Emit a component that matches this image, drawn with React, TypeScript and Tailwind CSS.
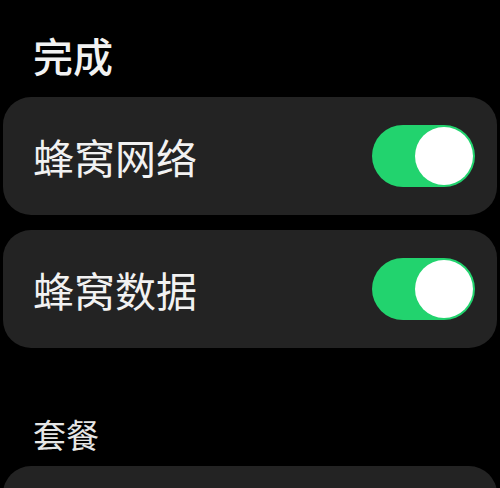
import { useState } from 'react';

const cjk = { fontFamily: '"Noto Sans CJK SC", "Noto Sans", sans-serif' };

function Toggle({ on, onChange }: { on: boolean; onChange: (v: boolean) => void }) {
  return (
    <button
      type="button"
      onClick={() => onChange(!on)}
      className={
        'relative h-[62px] w-[103px] shrink-0 rounded-full transition-colors ' +
        (on ? 'bg-[#22d36e]' : 'bg-[#3a3a3c]')
      }
    >
      <span
        className={
          'absolute top-[2px] h-[58px] w-[58px] rounded-full bg-white transition-all ' +
          (on ? 'right-[2px]' : 'left-[2px]')
        }
      />
    </button>
  );
}

function Row({ label }: { label: string }) {
  const [on, setOn] = useState(true);
  return (
    <div className="flex h-[118px] items-center justify-between rounded-[28px] bg-[#232323] pl-[30px] pr-[22px]">
      <span className="text-[41px] leading-none text-[#f2f2f2]">{label}</span>
      <Toggle on={on} onChange={setOn} />
    </div>
  );
}

export default function App() {
  return (
    <div className="h-[488px] w-[500px] overflow-hidden bg-black px-[3px]" style={cjk}>
      <div className="pl-[30px] pt-[35px] text-[40px] font-medium leading-none text-[#f2f2f2]">完成</div>
      <div className="mt-[22px] flex flex-col gap-[15px]">
        <Row label="蜂窝网络" />
        <Row label="蜂窝数据" />
      </div>
      <div className="mt-[70px] pl-[30px] text-[33px] leading-none text-[#e6e6e6]">套餐</div>
      <div className="mt-[15px] h-[80px] rounded-[28px] bg-[#232323]" />
    </div>
  );
}
